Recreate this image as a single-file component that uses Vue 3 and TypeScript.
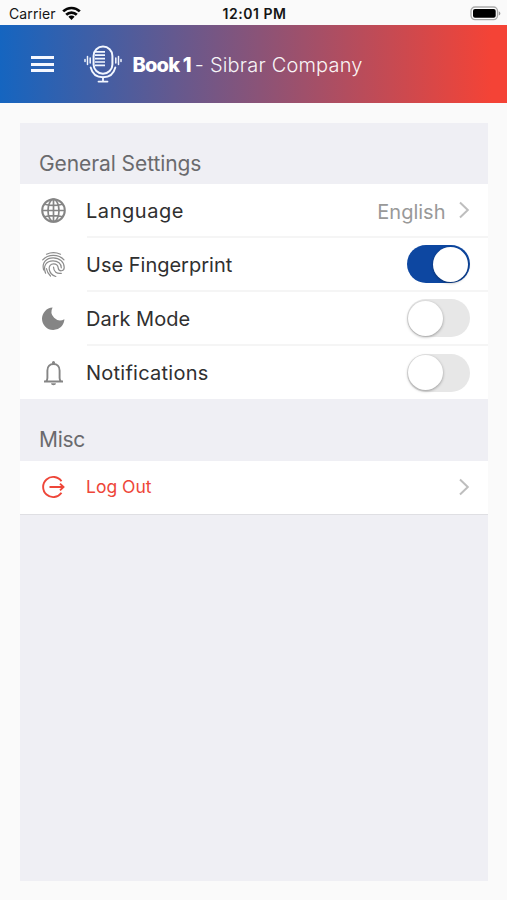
<script setup lang="ts">
import { reactive } from 'vue'

interface Row {
  id: string
  label: string
  kind: 'link' | 'switch'
  value?: string
}

const generalRows: Row[] = [
  { id: 'language', label: 'Language', kind: 'link', value: 'English' },
  { id: 'fingerprint', label: 'Use Fingerprint', kind: 'switch' },
  { id: 'dark', label: 'Dark Mode', kind: 'switch' },
  { id: 'notifications', label: 'Notifications', kind: 'switch' },
]

const switches = reactive<Record<string, boolean>>({
  fingerprint: true,
  dark: false,
  notifications: false,
})

function toggle(id: string) {
  switches[id] = !switches[id]
}
</script>

<template>
  <div class="screen">
    <div class="status">
      <div class="carrier">
        <span class="carrier-name">Carrier</span>
        <svg class="wifi" viewBox="0 0 19 14" width="19" height="14">
          <g fill="none" stroke="#050505" stroke-width="2.7">
            <path d="M1.2 5.4a11.8 11.8 0 0 1 16.6 0" />
            <path d="M4.2 8.7a7.6 7.6 0 0 1 10.6 0" />
          </g>
          <path d="M9.5 14 6.4 10.8a4.4 4.4 0 0 1 6.2 0z" fill="#050505" />
        </svg>
      </div>
      <span class="clock">12:01 PM</span>
      <svg class="battery" viewBox="0 0 31 15" width="31" height="15">
        <rect x="1" y="1" width="26.5" height="12.6" rx="4" fill="#fff" stroke="#aaa" stroke-width="1.3" />
        <rect x="3" y="3" width="22.7" height="8.8" rx="2" fill="#000" />
        <path d="M28.8 5.2v4.4q1.6-.7 1.6-2.2t-1.6-2.2z" fill="#999" />
      </svg>
    </div>

    <header class="bar">
      <button class="menu" aria-label="Menu"><i></i><i></i><i></i></button>
      <svg class="mic" viewBox="0 0 38 38" width="38" height="38">
        <g fill="none" stroke="#f2f7ff" stroke-linecap="round">
          <rect x="9.600" y="1.500" width="18.800" height="27.300" rx="9.400" stroke-width="2" />
          <path d="M6.700 22.500c1.500 6.300 6 9.700 12.300 9.700s10.800-3.400 12.300-9.700" stroke-width="1.900" />
          <path d="M19 32.500v4M14.500 36.600h9" stroke-width="1.800" />
          <path d="M11 6.800h10M11 10.200h10M11 13.600h10M11 17h10M11 20.400h10" stroke-width="1.700" stroke-linecap="butt" />
          <path d="M1 14.500v2M3.500 11.500v8M6.200 13v5M31.800 13v5M34.500 11.500v8M37 14.500v2" stroke-width="1.500" />
        </g>
      </svg>
      <h1 class="title"><b>Book 1</b><span>- Sibrar Company</span></h1>
    </header>

    <main class="panel">
      <h2 class="section">General Settings</h2>
      <div v-for="row in generalRows" :key="row.id" class="row">
        <div class="icon">
          <svg v-if="row.id === 'language'" viewBox="0 0 26 26" width="26" height="26" fill="none" stroke="#858585" stroke-width="1.700">
            <circle cx="13.500" cy="12.500" r="11.300" stroke-width="2" />
            <ellipse cx="13.500" cy="12.500" rx="5.500" ry="11.300" />
            <path d="M13.500 1.200v22.600M2.200 12.500h22.600M4.800 6.200q8.700 2.500 17.400 0M4.800 18.800q8.700-2.500 17.400 0" />
          </svg>
          <svg v-else-if="row.id === 'fingerprint'" viewBox="0 0 26 26" width="26" height="26" fill="none" stroke="#8c8c8c" stroke-width="1.200" stroke-linecap="round">
            <path d="M6.500 2.200Q13.500-.8 20.500 2.200" />
            <path d="M2.700 7.800C8 1.900 18.500 1.800 24 7.800" />
            <path d="M3.600 18C1.500 10.500 6.500 5.800 13.200 5.800c6.500 0 11 4.200 11 9.700 0 4.300-5.700 4.300-6 .4-.3-2.700-2-4-4.600-4-3 0-4.800 2.200-4.400 5.300.5 3.600 3 6.300 6.600 7.300" />
            <path d="M5.600 21.200C2.500 13.800 6.500 8.800 13 8.800c5 0 8.300 3 8.300 7" />
            <path d="M13.500 15c.2 4.700 3.300 7 7.800 6.300" />
            <path d="M10.500 24q-3.300-3.200-4.100-7.500" />
          </svg>
          <svg v-else-if="row.id === 'dark'" viewBox="0 0 26 26" width="26" height="26">
            <path d="M12.600 1.600A8.600 8.600 0 0 0 24.400 13.200A11.200 11.200 0 1 1 12.600 1.600Z" fill="#858585" />
          </svg>
          <svg v-else viewBox="0 0 26 26" width="26" height="26">
            <path d="M4 21.500h19M6.100 21.300c1-.8 1.300-2 1.300-3.300V10.500C7.400 6.500 10 4 13.500 4s6.100 2.500 6.100 6.500V18c0 1.300.3 2.500 1.300 3.300" fill="none" stroke="#858585" stroke-width="1.900" />
            <path d="M12 3.700V2.500a1.500 1.500 0 0 1 3 0v1.200zM11 23.200h5a2.500 2.100 0 0 1-5 0z" fill="#858585" />
          </svg>
        </div>
        <div class="content">
          <span class="label" :class="row.id">{{ row.label }}</span>
          <div v-if="row.kind === 'link'" class="detail">
            <span class="value">{{ row.value }}</span>
            <svg class="chevron" viewBox="0 0 12 18" width="12" height="18"><path d="m2 1.500 7.800 7.500L2 16.500" /></svg>
          </div>
          <button
            v-else
            class="switch"
            :class="{ on: switches[row.id] }"
            role="switch"
            :aria-checked="switches[row.id]"
            :aria-label="row.label"
            @click="toggle(row.id)"
          ><i class="knob"></i></button>
        </div>
      </div>

      <h2 class="section misc">Misc</h2>
      <div class="row logout">
        <div class="icon">
          <svg viewBox="0 0 26 26" width="26" height="26" fill="none" stroke="#ee4639" stroke-width="1.900">
            <path d="M21.500 6.200A10.100 10.100 0 1 0 21.500 17.800" />
            <path d="M9.500 12h14M20 8.600l3.500 3.400-3.500 3.400" />
          </svg>
        </div>
        <div class="content">
          <span class="label exit">Log Out</span>
          <svg class="chevron" viewBox="0 0 12 18" width="12" height="18"><path d="m2 1.500 7.800 7.500L2 16.500" /></svg>
        </div>
      </div>
    </main>
  </div>
</template>

<style>
body {
  margin: 0;
  background: #fafafa;
}
</style>

<style scoped>
.screen {
  box-sizing: border-box;
  height: 900px;
  background: #fafafa;
  font-family: Inter, "Liberation Sans", sans-serif;
  color: #303030;
}
button {
  border: 0;
  padding: 0;
  background: none;
}
.status {
  box-sizing: border-box;
  height: 25px;
  padding: 2px 6px 0 9px;
  display: grid;
  grid-template-columns: 1fr auto 1fr;
  align-items: center;
  color: #151515;
  font-size: 14px;
  line-height: 23px;
}
.carrier {
  display: flex;
  align-items: center;
  gap: 6px;
}
.wifi {
  margin-top: -2px;
}
.carrier-name {
  letter-spacing: 0.1px;
}
.clock {
  margin-right: 1px;
  font-weight: 600;
  letter-spacing: 0.55px;
}
.battery {
  justify-self: end;
  margin-top: -1px;
}
.bar {
  box-sizing: border-box;
  height: 78px;
  padding-left: 31px;
  display: flex;
  align-items: center;
  background: linear-gradient(90deg, #1565c0 0%, #f44336 97%);
  color: #fff;
}
.menu {
  width: 23px;
  display: flex;
  flex-direction: column;
  gap: 3.500px;
}
.menu i {
  height: 3px;
  background: #f5f8ff;
}
.mic {
  margin-left: 29.500px;
}
.title {
  margin: 2px 0 0 11px;
  display: flex;
  gap: 4px;
  font-size: 20px;
  line-height: 28px;
  font-weight: 300;
  white-space: nowrap;
}
.title b {
  font-weight: 800;
  letter-spacing: -0.8px;
}
.title span {
  letter-spacing: 0.2px;
  opacity: 0.94;
}
.panel {
  box-sizing: border-box;
  height: 758px;
  margin: 20px 19.500px 0 20px;
  background: #efeff4;
}
.section {
  box-sizing: border-box;
  height: 61px;
  margin: 0;
  padding: 27px 0 0 19px;
  font-size: 21px;
  line-height: 28px;
  font-weight: 400;
  letter-spacing: -0.08px;
  color: #6a6a6d;
}
.misc {
  height: 62px;
  letter-spacing: -0.3px;
}
.row {
  height: 54px;
  display: flex;
  background: #fff;
}
.row:nth-of-type(4) {
  height: 53px;
}
.icon {
  width: 67px;
  padding-left: 20px;
  box-sizing: border-box;
  display: flex;
  align-items: center;
  flex: none;
}
.content {
  flex: 1;
  padding-right: 18px;
  display: flex;
  align-items: center;
  justify-content: space-between;
  border-bottom: 2px solid #f5f5f5;
}
.row:nth-of-type(4) .content {
  border-bottom: 0;
}
.label {
  margin: 1px 0 0 -1px;
  font-size: 20px;
  line-height: 28px;
}
.language {
  letter-spacing: 0.55px;
}
.notifications {
  letter-spacing: 0.25px;
}
.detail {
  display: flex;
  align-items: center;
}
.value {
  margin: 3px 12px 0 0;
  font-size: 20px;
  line-height: 26px;
  color: #999;
}
.chevron path {
  fill: none;
  stroke: #bebebe;
  stroke-width: 2;
}
.switch {
  width: 63px;
  height: 38px;
  padding: 1.500px;
  box-sizing: border-box;
  border-radius: 19px;
  display: flex;
  background: #e7e7e7;
}
.switch.on {
  justify-content: flex-end;
  background: #0d47a1;
}
.knob {
  width: 35px;
  height: 35px;
  border-radius: 50%;
  background: #fff;
  box-shadow: 0 1px 3px rgba(0, 0, 0, 0.35);
}
.logout {
  height: 53px;
  box-shadow: 0 1px #dfdfe3;
}
.logout .content {
  border-bottom-color: transparent;
}
.exit {
  margin-top: 0;
  color: #ee4639;
  font-size: 17.500px;
}
</style>
